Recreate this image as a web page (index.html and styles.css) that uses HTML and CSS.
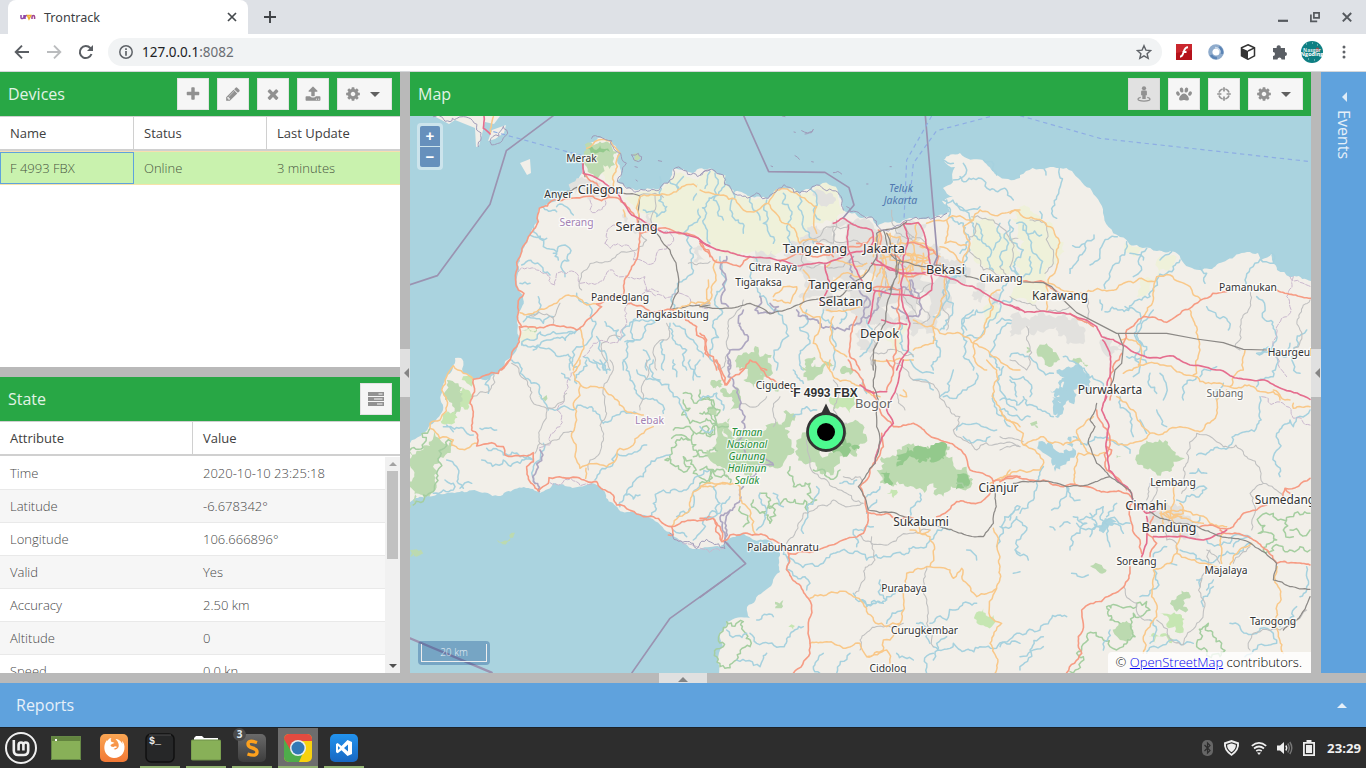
FILE: index.html
```html
<!DOCTYPE html>
<html lang="en">
<head>
<meta charset="utf-8">
<title>Trontrack</title>
<link rel="stylesheet" href="styles.css">
</head>
<body>
<svg class="defs" width="0" height="0" aria-hidden="true">
  <symbol id="plus" viewBox="0 0 1792 1792"><path d="M1600 736v192q0 40-28 68t-68 28h-416v416q0 40-28 68t-68 28h-192q-40 0-68-28t-28-68v-416h-416q-40 0-68-28t-28-68v-192q0-40 28-68t68-28h416v-416q0-40 28-68t68-28h192q40 0 68 28t28 68v416h416q40 0 68 28t28 68z"/></symbol>
  <symbol id="pencil" viewBox="0 0 1792 1792"><path d="M491 1536l91-91-235-235-91 91v107h128v128h107zm523-928q0-22-22-22-10 0-17 7l-542 542q-7 7-7 17 0 22 22 22 10 0 17-7l542-542q7-7 7-17zm-54-192l416 416-832 832h-416v-416zm683 96q0 53-37 90l-166 166-416-416 166-165q36-38 90-38 53 0 91 38l235 234q37 39 37 91z"/></symbol>
  <symbol id="times" viewBox="0 0 1792 1792"><path d="M1490 1322q0 40-28 68l-136 136q-28 28-68 28t-68-28l-294-294-294 294q-28 28-68 28t-68-28l-136-136q-28-28-28-68t28-68l294-294-294-294q-28-28-28-68t28-68l136-136q28-28 68-28t68 28l294 294 294-294q28-28 68-28t68 28l136 136q28 28 28 68t-28 68l-294 294 294 294q28 28 28 68z"/></symbol>
  <symbol id="upload" viewBox="0 0 1792 1792"><path d="M1344 1472q0-26-19-45t-45-19-45 19-19 45 19 45 45 19 45-19 19-45zm256 0q0-26-19-45t-45-19-45 19-19 45 19 45 45 19 45-19 19-45zm128-224v320q0 40-28 68t-68 28h-1472q-40 0-68-28t-28-68v-320q0-40 28-68t68-28h427q21 56 70.5 92t110.5 36h256q61 0 110.5-36t70.5-92h427q40 0 68 28t28 68zm-325-648q-17 40-59 40h-256v448q0 26-19 45t-45 19h-256q-26 0-45-19t-19-45v-448h-256q-42 0-59-40-17-39 14-69l448-448q18-19 45-19t45 19l448 448q31 30 14 69z"/></symbol>
  <symbol id="cog" viewBox="0 0 1792 1792"><path d="M1152 896q0-106-75-181t-181-75-181 75-75 181 75 181 181 75 181-75 75-181zm512-109v222q0 12-8 23t-20 13l-185 28q-19 54-39 91 35 50 107 138 10 12 10 25t-9 23q-27 37-99 108t-94 71q-12 0-26-9l-138-108q-44 23-91 38-16 136-29 186-7 28-36 28h-222q-14 0-24.5-8.5t-11.5-21.5l-28-184q-49-16-90-37l-141 107q-10 9-25 9-14 0-25-11-126-114-165-168-7-10-7-23 0-12 8-23 15-21 51-66.5t54-70.5q-27-50-41-99l-183-27q-13-2-21-12.5t-8-23.5v-222q0-12 8-23t19-13l186-28q14-46 39-92-40-57-107-138-10-12-10-24 0-10 9-23 26-36 98.5-107.5t94.5-71.5q13 0 26 10l138 107q44-23 91-38 16-136 29-186 7-28 36-28h222q14 0 24.5 8.5t11.5 21.5l28 184q49 16 90 37l142-107q9-9 24-9 13 0 25 10 129 119 165 170 7 8 7 22 0 12-8 23-15 21-51 66.5t-54 70.5q26 50 41 98l183 28q13 2 21 12.5t8 23.5z"/></symbol>
  <symbol id="street" viewBox="0 0 16 16"><circle cx="8" cy="2.300" r="2.100"/><path d="M6.300 4.600h3.400a1.200 1.200 0 0 1 1.200 1.200v3.400H9.700v3.900H6.300V9.200H5.100V5.800a1.200 1.200 0 0 1 1.200-1.200z"/><path d="M4.700 11.300C2.900 11.700 2 12.300 2 13c0 1.200 2.700 2.100 6 2.100s6-.9 6-2.100c0-.7-.9-1.300-2.700-1.700" fill="none" stroke="currentColor" stroke-width="1.300"/></symbol>
  <symbol id="paw" viewBox="0 0 16 16"><ellipse cx="5.600" cy="4" rx="1.800" ry="2.600" transform="rotate(-12 5.600 4)"/><ellipse cx="10.400" cy="4" rx="1.800" ry="2.600" transform="rotate(12 10.400 4)"/><ellipse cx="2" cy="7.600" rx="1.700" ry="2.300" transform="rotate(-25 2 7.600)"/><ellipse cx="14" cy="7.600" rx="1.700" ry="2.300" transform="rotate(25 14 7.600)"/><path d="M8 7.500c2.300 0 4.900 3.400 4.900 5.400 0 1.300-1 1.700-2.100 1.700-1.200 0-1.700-.7-2.800-.7s-1.700.7-2.900.7c-1.100 0-2-.5-2-1.700C3.100 10.900 5.700 7.500 8 7.500z"/></symbol>
  <symbol id="cross" viewBox="0 0 16 16"><path fill="none" stroke="currentColor" stroke-width="1.700" d="M6.600 3a5.200 5.200 0 0 0-3.600 3.600M9.400 3A5.200 5.200 0 0 1 13 6.600M13 9.400A5.200 5.200 0 0 1 9.400 13M6.600 13A5.200 5.200 0 0 1 3 9.400M8 1.200v4.200M8 10.600v4.200M1.200 8h4.200M10.600 8h4.200"/></symbol>
</svg>

<header class="tabs">
  <div class="tab">
    <svg class="favicon" viewBox="0 0 16 16" fill="none" stroke-width="1.500"><path stroke="#8e44a5" d="M1 6v2.500q0 1.500 1.500 1 1.500 0 1.500-2V6M5 10V8q0-1.500 2-1.500"/><path stroke="#f0b030" d="M7.500 6.500h3.300L9 10z"/><path stroke="#a04592" d="M12 10V8q0-1.500 1.300-1.500T14.600 8v2"/></svg>
    <span class="tab-title">Trontrack</span>
    <svg class="tab-close" viewBox="0 0 10 10"><path d="M1 1l8 8M9 1L1 9" stroke="#45494d" stroke-width="1.700"/></svg>
  </div>
  <svg class="new-tab" viewBox="0 0 12 12"><path d="M6 0v12M0 6h12" stroke="#3f4246" stroke-width="1.900"/></svg>
  <div class="win">
    <svg width="10" height="12" viewBox="0 0 10 12"><path d="M0 9.800h10" stroke="#55595e" stroke-width="2.200"/></svg>
    <svg width="10" height="12" viewBox="0 0 10 12" fill="none" stroke="#55595e" stroke-width="1.700"><path d="M3.900 1.900h5.200v5H3.900zM.9 3.500v6.800h6.300"/></svg>
    <svg width="10" height="12" viewBox="0 0 10 12"><path d="M.8 2l8.400 8.400M9.200 2L.8 10.400" stroke="#55595e" stroke-width="2"/></svg>
  </div>
</header>

<nav class="toolbar">
  <svg class="nav" viewBox="0 0 16 16"><path d="M15 8H2M8 1.700L1.700 8 8 14.300" fill="none" stroke="#5a5e63" stroke-width="1.900"/></svg>
  <svg class="nav" viewBox="0 0 16 16"><path d="M1 8h13M8 1.700L14.300 8 8 14.300" fill="none" stroke="#babcbe" stroke-width="1.900"/></svg>
  <svg class="nav" viewBox="0 0 16 16"><path d="M13.500 10A6 6 0 1 1 12.300 4L14 5.600" fill="none" stroke="#5a5e63" stroke-width="2"/><path d="M15 1v6H9z" fill="#5a5e63"/></svg>
  <div class="omnibox">
    <svg class="info" viewBox="0 0 14 14"><circle cx="7" cy="7" r="6.200" fill="none" stroke="#5f6368" stroke-width="1.500"/><path d="M7 3.200v1.700M7 6v4.800" stroke="#5f6368" stroke-width="1.700"/></svg>
    <span class="url">127.0.0.1<span>:8082</span></span>
    <svg class="star" viewBox="0 0 16 16"><path d="M8 1.700l1.900 4.400 4.800.4-3.600 3.200 1.100 4.700L8 11.900l-4.200 2.500 1.100-4.700L1.300 6.500l4.800-.4z" fill="none" stroke="#5f6368" stroke-width="1.400"/></svg>
  </div>
  <div class="exts">
    <svg width="16" height="16" viewBox="0 0 16 16"><path fill="#b5121b" d="M0 0h16v16H0z"/><path fill="#d8363c" d="M0 0h16v6L0 9z" opacity=".6"/><path d="M12 3.200c-3.500 0-3.700 3-4.500 5.300C6.800 10.800 6 12.700 4 12.800M6.500 8h4" stroke="#fff" stroke-width="1.900" fill="none"/></svg>
    <svg width="16" height="16" viewBox="0 0 16 16" fill="none"><circle cx="8" cy="8" r="5.700" stroke="#8eabcc" stroke-width="4.200"/><path d="M3 11A6 6 0 0 0 9 14M11 3q4 3 3 7" stroke="#5b84b5" stroke-width="2.500"/><path d="M7 3.500q5 .5 5 5" stroke="#c9d9e9" stroke-width="1.500"/></svg>
    <svg width="16" height="16" viewBox="0 0 16 16"><path d="M8 .8l6.500 3v8L8 15.300l-6.500-3.500v-8z" fill="#fff" stroke="#333" stroke-width="1.500"/><path d="M1.500 4L8 7v8.300l-6.500-3.500z" fill="#333"/><path d="M8 7l6.500-3.200" stroke="#333" stroke-width="1.400"/></svg>
    <svg width="16" height="16" viewBox="0 0 16 16"><path fill="#5a5e64" d="M1 4h3.700a2.100 2.100 0 1 1 4 0H13v4a2 2 0 1 1 0 4v3.500H9.500a2 2 0 1 0-4 0H1V12a2 2 0 1 0 0-4z"/></svg>
    <svg class="avatar" width="22" height="22" viewBox="0 0 22 22"><circle cx="11" cy="11" r="11" fill="#0e7f83"/><path d="M5 3h1M16 4h1M3 8h1M18 15h1M7 18h1M13 19h1M11 2h1M4 15h1" stroke="#b6dede"/><path d="M15 7q3-2 4 3l-4 1z" fill="#9a4d52"/><text x="11" y="10.500">Nasgor</text><text x="11" y="15" class="b">Ngoding</text></svg>
    <svg class="dots" width="4" height="14" viewBox="0 0 4 14" fill="#5f6368"><circle cx="2" cy="2" r="1.500"/><circle cx="2" cy="7" r="1.500"/><circle cx="2" cy="12" r="1.500"/></svg>
  </div>
</nav>

<main class="app">
  <section class="left">
    <div class="panel devices">
      <div class="bar"><h2>Devices</h2>
        <button class="btn"><svg><use href="#plus"/></svg></button>
        <button class="btn"><svg><use href="#pencil"/></svg></button>
        <button class="btn"><svg><use href="#times"/></svg></button>
        <button class="btn"><svg><use href="#upload"/></svg></button>
        <button class="btn menu"><svg><use href="#cog"/></svg><i></i></button>
      </div>
      <div class="head three"><span>Name</span><span>Status</span><span>Last Update</span></div>
      <div class="row three picked"><span class="focus">F 4993 FBX</span><span>Online</span><span>3 minutes</span></div>
    </div>
    <div class="split-h"></div>
    <div class="panel state">
      <div class="bar"><h2>State</h2>
        <button class="btn"><svg viewBox="0 0 16 16"><path fill-rule="evenodd" d="M0 1h16v4H0zM10.500 2.500v1h4v-1zM0 6h16v4H0zM6 7.500v1h8.500v-1zM0 11h16v4H0zM9 12.500v1h5.500v-1z"/></svg></button>
      </div>
      <div class="head two"><span>Attribute</span><span>Value</span></div>
      <div class="scroller">
        <div class="rows">
          <div class="row two"><span>Time</span><span>2020-10-10 23:25:18</span></div>
          <div class="row two"><span>Latitude</span><span>-6.678342°</span></div>
          <div class="row two"><span>Longitude</span><span>106.666896°</span></div>
          <div class="row two"><span>Valid</span><span>Yes</span></div>
          <div class="row two"><span>Accuracy</span><span>2.50 km</span></div>
          <div class="row two"><span>Altitude</span><span>0</span></div>
          <div class="row two"><span>Speed</span><span>0.0 kn</span></div>
        </div>
        <div class="scrollbar"><i class="up"></i><b></b><i class="down"></i></div>
      </div>
    </div>
  </section>
  <div class="split-v"><i></i></div>
  <section class="mappanel">
    <div class="bar"><h2>Map</h2>
      <button class="btn pressed"><svg><use href="#street"/></svg></button>
      <button class="btn"><svg><use href="#paw"/></svg></button>
      <button class="btn"><svg><use href="#cross"/></svg></button>
      <button class="btn menu"><svg><use href="#cog"/></svg><i></i></button>
    </div>
    <div class="mapview">
<svg class="map" viewBox="410 116 901 557">
<path class="land rough" d="M502 370 513 355 519 340 517 323 518 313 523 297 518 287 518 273 520 257 528 237 538 222 539 208 553 202 573 185 582 173 583 157 590 143 598 138 610 141 619 153 621 173 617 182 627 188 643 190 660 188 670 180 673 169 693 173 712 169 723 175 732 190 750 197 768 198 778 188 800 193 817 185 838 193 843 210 855 213 862 218 873 218 877 227 900 223 913 218 933 218 950 212 942 201 953 197 943 188 953 182 955 167 943 160 960 153 983 160 997 175 1020 178 1020 175 1047 168 1060 168 1072 171 1090 188 1103 213 1120 237 1143 248 1157 251 1175 252 1192 268 1212 269 1227 260 1247 252 1258 253 1261 260 1272 253 1277 270 1290 277 1320 290 1320 680 717 680 718 660 723 647 720 632 727 622 750 618 747 607 763 592 780 572 780 553 772 542 743 533 727 540 720 547 700 549 687 545 677 538 670 532 650 518 627 512 613 503 603 490 592 483 553 483 540 493 533 489 498 496 477 491 437 494 405 506 405 452 423 433 430 425 443 410 442 390 453 368 455 358 461 358 463 373 473 380 497 374Z"/>
<path class="land" d="M410 116H500L494 124 485 122 479 146 476 147 475 128 455 120 449 124 432 115ZM492 130l14-5-2 8-9 6-7 2zM520 163l10-4 1 14-4 2z"/>
<g transform="translate(410 110) scale(.33333)">
  <path class="farm rough" d="M790 180 900 190 970 240 1000 300 1000 420 900 405 830 370 760 350 700 310 640 260 690 245 750 240 780 215ZM330 670 385 645 380 690 340 700ZM580 165 615 165 605 225 585 210Z"/>
  <path class="wood rough" d="M522 125 545 98 595 97 622 125 615 165 580 165 570 195 540 190 525 165ZM665 135 685 130 692 145 675 155ZM335 662 380 655 375 668Z"/>
  <path class="wood3 rough" d="M530 115 570 105 600 125 560 130Z"/>
  <path class="urban rough" d="M500 205 560 210 600 225 600 260 560 260 480 235ZM640 310 720 300 740 350 660 350ZM840 420 880 415 885 450 850 455Z"/>
  <path class="river rough" d="M370 345 385 380 410 385M430 430 445 410 465 405 480 430 455 460 465 500M360 365 400 410 440 425 445 450M335 465 390 465 420 495M440 290 480 300 490 315M395 290 440 305M340 635 400 640 430 620M335 700 390 705 420 690 500 660M335 705 360 690 430 665 510 655M385 560 390 595 350 620M545 610 548 660 500 710 480 780M370 720 430 725 500 770M585 635 625 660 630 690 740 630M740 630 690 690 650 700 640 780M780 640 790 690 830 720 830 780M790 640 850 690 880 740M500 550 540 590 545 610M680 625 675 690 645 695M750 200 765 290M820 200 805 240 765 215M900 205 870 250 820 370 835 400 820 510 790 600M770 290 740 320 700 300M330 520 360 520M880 200 850 270M560 680 590 740 580 780M520 740 560 760 570 780M700 720 710 780M760 690 760 780"/>
  <path class="minor rough" d="M515 540 510 510 560 455 620 435 680 420 710 390 690 360M690 255 735 250 760 262M735 255 725 340M430 640 450 580M340 612 430 625M630 680 575 700 580 740 600 780M770 640 770 690 730 720 740 780M835 460 885 460 900 455"/>
  <path class="county rough" d="M325 485 380 480 410 490 435 525 440 490 500 490 510 520 545 520 600 480 640 500 705 500 710 540 655 580 650 640 600 700 540 715 520 740M585 400 590 370 620 345 660 345M585 400 600 415 650 405 670 450 730 460 785 400 790 380 745 360M540 270 540 300 575 300 585 270M710 545 765 565 800 550 860 585 900 590M705 540 745 545"/>
  <path class="rail rough" d="M525 200 520 160M625 248 690 258 685 340 740 370 780 420 805 500 805 545 780 600 900 585M470 245 500 232"/>
  <path class="sec rough" d="M330 608 380 605 440 580 490 557 560 582M510 655 520 690 510 740 490 780M610 230 622 170 630 130 600 93 565 90 530 115M685 330 690 260 740 255 800 245 850 222 900 245M895 510 890 550 900 580 790 600M250 20 240 70M640 300 645 320"/>
  <path class="prim rough" d="M275 780 320 710 328 650 380 655 420 645 500 660 545 620 575 590 560 582 640 555 650 500 690 370 670 310 645 280 600 262 575 272 520 260 480 265 430 270 388 295 385 335 355 380 330 440 325 540 342 550 322 620 335 650M520 190 560 220 600 262M650 580 700 590 720 605 790 600M820 620 860 650 860 675 885 690 885 730 900 745M745 355 830 370 870 390 900 440M690 370 720 362"/>
  <path class="mot rough" d="M518 160 520 190 570 210 600 232 630 260 665 315 720 345 760 368 830 375 865 385 900 410M222 18 220 55 240 72"/>
  <path class="isle rough" d="M665 135 685 130 695 140 685 155 672 150ZM280 50 290 60 245 105 240 95ZM70 20 120 35 160 20 200 60 205 110M675 170 682 172M745 152 755 154M678 210 682 213M545 85 570 80 605 92 632 130 635 190 622 215 650 235 700 240 750 235 780 210 790 178 850 190 900 180"/>
  <path class="admin" d="M0 524 82 497 240 283 289 122 430 17"/>
  <path class="ferry" d="M250 65 520 138"/>
</g>
<g transform="translate(700 110) scale(.33333)">
  <path class="farm rough" d="M0 200 35 180 70 200 95 245 200 270 235 238 300 255 350 228 415 250 435 305 380 330 330 350 330 390 250 400 130 430 60 400 0 380ZM810 320 870 320 920 370 950 460 930 490 850 470 815 400ZM550 680 640 650 600 730ZM850 640 900 600 870 570ZM960 290 1000 310 1060 350 1080 450 1030 520 950 470Z"/>
  <path class="urban rough" d="M310 380 400 330 480 330 530 360 620 340 680 340 720 440 780 450 800 500 730 520 720 600 700 670 640 680 600 630 540 640 520 720 480 720 470 620 400 600 300 590 310 500 260 470ZM830 520 890 540 880 590 820 570ZM165 420 230 440 220 470 160 450ZM360 240 400 260 380 290 350 280Z"/>
  <path class="land rough" d="M540 590 600 570 640 600 580 630ZM640 540 690 560 680 640 640 620ZM400 350 440 340 440 400 400 400ZM480 480 530 500 520 530 490 520ZM330 400 390 400 380 470 320 450ZM700 460 740 480 700 520 660 510ZM400 500 450 520 440 580 400 560ZM500 640 540 650 510 700 490 680Z"/>
  <path class="wood rough" d="M115 735 215 735 215 780 120 780ZM325 745 345 740 350 780 325 780ZM365 765 410 770 410 780 360 780Z"/>
  <path class="river rough" d="M30 185 15 235M45 190 40 270 70 330M80 215 40 260 10 340 30 400M110 240 115 330 130 370M200 270 190 340 220 400M250 250 270 300 260 350 280 410M300 255 310 320 340 400M330 235 340 300 360 330M150 265 160 300 180 330M60 440 75 520 65 600 40 640 30 720 60 780M160 440 150 500 180 560 230 600 250 640 230 780M320 600 330 700 310 780M370 600 400 690 400 780M430 600 420 640M500 630 480 740M600 640 600 700 640 740M780 500 730 540 760 580 720 660M810 420 800 500M820 600 800 660M730 150 760 160M730 270 780 290 820 340 840 390M780 200 820 205 850 210M740 270 790 340 780 430M850 150 890 195M850 210 870 240 940 270M770 500 700 620M960 500 900 560 830 600 790 680M940 560 900 580 870 630 790 680 790 740 820 780M960 640 900 670 870 740 900 780M700 680 720 740 700 780M880 480 870 440 850 400 830 340M900 340 880 420M930 350 920 420 900 470M770 280 840 290M760 210 790 200 790 160M890 640 960 650"/>
  <path class="minor rough" d="M0 590 30 570M340 395 400 400 410 330M320 470 430 470 500 460M400 350 400 390 480 400M620 370 680 400M610 340 640 400 600 440M530 400 560 500 530 600M740 490 730 560 740 660M540 640 520 780M630 520 610 560 650 620M815 320 880 330 930 390 960 380M350 530 420 540 480 520M600 380 590 440 620 480M130 570 100 620 90 720 60 780M700 520 650 580 690 620 640 640M300 480 310 400 380 350 460 340M575 300 590 370 640 380M520 730 640 735M830 340 810 380 850 480 930 500M900 470 940 510 960 510"/>
  <path class="cnt rough" d="M80 440 65 480 75 540 65 580 85 590M180 560 165 600 215 610 235 590 210 580M120 640 145 680 125 715 90 720 85 780M130 600 115 640M290 600 295 618 490 620 500 560 480 530 450 500 460 440M490 620 530 600 560 540 640 560 630 510M500 560 490 590M575 590 620 625 655 620 655 550 635 510"/>
  <path class="sec rough" d="M0 240 70 255 130 300 205 280 230 240 290 250 350 290 350 370M205 280 240 330 290 370 300 400 350 390M0 590 30 570 50 450M220 560 250 530 290 530 270 580 220 570M310 480 330 520 300 590 360 620 340 700 390 780M380 470 400 450 470 470 500 460M390 520 430 490 480 500 500 480M380 600 440 600 480 590M400 620 390 680 440 740M620 430 640 480 610 500M540 420 600 430 650 440 700 430M560 370 600 380 600 430M570 370 570 450 600 460M540 370 520 440M600 460 700 470M650 340 650 460M620 480 630 540M550 480 560 540M600 450 690 450M660 410 720 440M540 360 550 440 530 500M740 330 735 400 800 405M740 330 820 330 840 300 960 300M680 340 740 330M720 410 790 460 810 400 790 350 820 330M640 630 700 650 720 670 780 670 820 700 960 780M870 560 870 620 820 700 820 740 860 780M720 460 740 500 720 600 700 700 640 720M900 540 870 560M550 420 550 500 540 560M520 750 600 745 640 750M590 450 595 520M570 400 700 420M640 430 640 500M670 430 670 490M585 475 700 485M540 445 690 450M520 460 515 540"/>
  <path class="prim rough" d="M0 400 40 450 120 470 150 440M240 455 290 430 400 430 480 410 520 380M500 400 470 400M350 400 390 420 400 440M470 620 450 740 480 780M0 670 20 690 15 720 40 740 50 780M120 780 150 755 200 780M600 490 640 500 720 490M510 540 600 540M600 540 590 600 600 650 580 740 580 780M620 400 700 420 715 440 710 470M535 360 540 420 600 450"/>
  <path class="mot rough" d="M0 395 35 412 100 430 150 440 230 450 290 468 380 460 440 435 480 425 530 420 560 425M445 345 445 420 470 480 490 520M430 325 480 352 515 360 520 395 500 420M515 460 600 490 640 490 740 500 840 540 960 600M610 340 655 338 675 380 690 460 695 540 660 565 520 540M375 465 390 520 360 580M400 340 430 323M610 490 605 560 630 640 625 720 590 780M610 490 610 440 625 390 610 340M545 630 620 643M525 545 515 600 505 640M530 430 530 450 570 480 640 490"/>
  <path class="rail rough" d="M0 590 150 580 210 612 280 590 420 560 490 500 530 440 530 370 550 360 600 350 620 335M560 370 590 450 740 470 800 500 840 510M600 450 580 520 560 600 555 640 520 720 520 780M550 360 570 430 590 450M590 450 590 500 570 540"/>
  <path class="isle rough" d="M305 62 340 58 315 72M285 137 298 148M247 18 255 20M400 188 425 192M335 155 340 156M570 170 574 170M500 222 504 222M213 168 218 170M282 66 286 67M440 290 470 305 520 325 530 345 600 345 640 325 700 325 740 310"/>
  <path class="isle rough" d="M0 195 35 178 70 195 95 240 150 262 205 265 235 235 300 250 350 225 415 248 430 300"/>
  <path class="admin" d="M131 17 206 185 375 187 447 233 462 285 430 323M676 17 712 440 695 480"/>
  <path class="ferry" d="M695 18 620 150 612 330M870 20 710 62 640 160 630 260"/>
</g>
<g transform="translate(1010 110) scale(.33333)">
  <path class="farm rough" d="M0 320 60 340 90 420 110 490 60 580 0 560ZM460 440 500 440 490 470 440 500ZM385 500 435 510 405 560 380 560ZM340 390 400 415 370 440Z"/>
  <path class="urban rough" d="M0 620 60 630 100 600 160 610 220 650 210 700 170 690 140 650 60 650 0 680ZM270 690 330 690 335 730 300 740Z"/>
  <path class="wood rough" d="M85 710 110 700 150 750 130 765 95 740ZM50 710 60 725 50 730ZM190 745 235 765 230 770 185 755Z"/>
  <path class="lake rough" d="M140 790 190 770 240 800 240 830 205 825 175 870 135 860Z"/>
  <path class="river rough" d="M0 330 40 420 30 500M20 340 70 430 90 490M40 345 50 370 95 375M0 470 40 500 60 440M148 175 140 260 125 310 140 325M103 178 108 195M188 407 225 400 252 375M225 400 205 450 180 490M322 380 275 410 240 465M350 395 330 440 300 500 285 535M410 415 395 480 370 500M400 450 360 430M485 425 450 450M510 450 470 490 440 510 420 560 370 580 330 600 285 605M570 470 590 490 585 520M785 430 790 460 720 475 705 510 720 540M345 590 390 640 380 690 410 710 400 740M430 600 390 660 380 730 370 800M590 590 620 620 640 620 655 660M740 560 765 590 765 630 795 660 790 700M790 700 740 730 830 740 840 700M890 660 860 690 850 760 870 790M0 740 60 740 90 780 130 790M160 740 200 760 230 800 280 830M0 800 40 800 60 860M560 800 520 840 520 870M620 770 570 800M800 740 790 800 740 830M350 740 410 760M450 790 470 830 460 870M420 790 440 850M90 305 95 325M270 570 275 600M640 820 620 870"/>
  <path class="minor rough" d="M0 390 10 430 0 470M60 330 110 350 130 420 130 460 105 490M230 640 235 570 220 550M720 540 715 600 690 650 675 710 690 720M900 570 870 610 870 660 850 720M0 560 60 580 120 600 180 590M50 650 60 710 50 780M0 750 50 780"/>
  <path class="county rough" d="M850 500 830 560 830 620 800 670 795 740 830 800M840 500 903 530"/>
  <path class="sec rough" d="M0 310 15 300 50 325 100 335 145 385 140 440 120 500 115 520 180 545 290 543 395 505 435 515 440 500 480 495 540 530 572 570M435 515 430 570 400 620M110 520 110 600M540 600 560 650 570 720 560 790 550 795M340 790 390 765 460 765 500 785 560 800 620 820 680 835 730 830 790 845 810 870M705 720 700 780 670 800 660 830M335 690 390 705 385 765M150 560 130 540"/>
  <path class="prim rough" d="M40 513 100 515 150 550M340 700 350 660 400 620 470 637 535 598 572 570 650 545M800 540 850 555 903 565M180 610 250 650M300 870 300 800 335 730"/>
  <path class="mot rough" d="M0 585 45 607 100 603 180 612 260 650 275 680 340 705 410 742 490 738 540 765 630 780 660 797 770 812 820 838 900 868M278 690 302 740 300 800 285 870"/>
  <path class="rail" d="M40 516 100 518 125 530 160 570 200 608 320 670 470 670 560 687 640 698 700 718 770 720M325 672 340 710 335 760 315 780 310 810 290 850"/>
  <path class="ferry" d="M30 17 270 85 903 155"/>
</g>
<g transform="translate(410 360) scale(.33333)">
  <path class="wood rough" d="M60 205 125 245 90 290 80 340 70 395 40 405 10 435 -15 440 -15 270ZM110 60 145 70 150 155 120 165 105 120ZM260 540 315 518 312 525 265 542ZM0 570 20 568 40 580 20 590 0 590ZM910 190 960 175 960 310 920 315 905 265ZM905 60 930 60 935 80 915 88ZM895 140 925 145 920 165 900 165ZM385 108 410 105 405 125Z"/>
  <path class="wood2 rough" d="M145 95 175 90 178 140 150 140ZM105 160 138 155 135 188 92 185ZM155 60 190 55 185 80Z"/>
  <path class="forest rough" d="M60 205 0 270M125 245 90 290 80 340 70 395 40 405 10 435M820 100 860 130 905 120 930 150 920 190 880 185 840 190 815 165 840 145 820 120M790 210 850 215 900 225 955 200M850 215 850 270 900 270 930 300 880 290 850 290M765 300 800 255 840 240 785 235M765 300 790 315 840 320 820 290 845 300 850 340 910 330 960 370M900 330 950 350"/>
  <path class="river rough" d="M305 0 330 40 380 70 400 120 415 150M110 300 140 320 145 370 160 385M185 370 150 385M210 205 260 210M215 300 280 300 330 310 370 300M230 265 280 285 330 290 370 305M110 195 160 205 190 225M415 145 490 150 520 140 560 160 580 190 620 165 680 160M640 0 660 60 690 110 740 120 760 160M730 0 740 60 790 110 830 170M790 0 800 50M840 0 850 60M710 255 690 270 620 280 600 320 555 360M780 285 740 295 700 350 650 400 630 440M900 330 850 370 800 390 760 390 730 430 720 470M870 370 850 440 800 470M960 410 930 460 880 480 850 540M400 250 370 320 375 370M70 400 100 390 130 390M105 360 130 370 130 390M130 215 100 200M500 70 520 30 530 0M550 0 590 40M570 0 600 30M790 510 830 530M920 100 940 150M870 50 870 0M690 405 650 405M240 50 235 100M455 40 480 60M680 30 750 60"/>
  <path class="cnt rough" d="M960 450 945 490 945 545 960 560M390 270 380 330 368 350 388 395"/>
  <path class="county rough" d="M500 30 470 90 440 150 450 200 420 255 385 265M545 372 420 368M800 540 860 560 940 565"/>
  <path class="minor rough" d="M305 10 350 60 360 110 410 145 395 200 390 250 440 240 490 215M375 280 390 250M470 100 440 135 410 145M600 0 605 40 585 110 590 160 575 210 575 260 540 300 535 330M710 0 705 60 690 150M185 110 240 90 250 40"/>
  <path class="sec rough" d="M190 60 160 40 130 17 110 50 95 90 110 120 90 180 60 190 60 205 130 240 125 255 150 268 200 250M510 0 490 40 512 75 490 130 500 180 485 220 495 290 510 325 590 320 630 265 670 255 690 225 730 200M512 75 560 80 610 110 650 155 700 165M528 325 527 355M785 500 840 450 850 395 900 378 960 372"/>
  <path class="prim rough" d="M300 0 265 40 190 58 180 130 190 155 185 210 203 225 200 258 245 248 280 260 285 285 330 288 370 278 370 305 350 320 355 350 385 393 415 370 417 353 500 352 560 365 620 435 700 470 730 470 785 500 790 525 775 525M785 500 850 480 895 470 915 480 935 545 950 540M920 0 935 50 950 75 960 60"/>
  <path class="admin wide" d="M0 835 245 938"/><path class="admin" d="M666 938 779 776 960 646"/>
  <path class="isle rough" d="M945 545 945 566 860 566 850 550 800 540 780 520"/>
</g>
<g transform="translate(700 360) scale(.33333)">
  <path class="wood rough" d="M20 270 70 210 150 220 215 190 270 215 275 250 250 310 200 310 150 350 90 340 40 310ZM290 250 330 215 360 270 400 280 430 210 480 190 495 250 470 290 420 310 400 345 350 330 310 310ZM540 370 530 330 590 270 640 250 670 260 710 260 750 260 760 310 800 320 790 390 730 410 700 370 640 380 580 380ZM60 90 110 80 120 130 90 150ZM120 0 180 0 190 60 130 60ZM305 20 345 10 370 30 340 60 310 50ZM35 60 65 60 60 85 40 85ZM215 60 240 70 235 95 205 90ZM250 155 280 160 270 200 245 190ZM225 725 250 720 245 745 225 745ZM420 30 460 35 450 45 425 42Z"/>
  <path class="wood2 rough" d="M825 765 850 745 880 765 875 800 830 780ZM390 110 450 90 470 130 450 160 400 150ZM560 400 590 390 580 415ZM265 800 285 798 280 810ZM350 190 380 200 370 220 340 215Z"/>
  <path class="wood3 rough" d="M590 285 620 260 640 275 690 265 740 265 720 300 690 290 660 310 620 300 590 320ZM420 220 440 210 440 250 480 260 430 290 400 280ZM540 340 560 330 580 370 555 370ZM770 360 790 340 790 385 760 395Z"/>
  <path class="forest rough" d="M0 160 40 180 30 230 0 220M0 330 40 330 30 370 0 370M270 320 280 380 330 370 350 420 320 450 240 435 180 460 160 420M80 785 130 785 150 860 110 900 60 920 50 890 70 860 60 820ZM120 440 130 500M340 330 380 350 420 330M770 370 800 380M180 400 200 400 210 490 180 460M0 90 40 120 20 160"/>
  <path class="river rough" d="M180 400 200 450 170 510M220 400 250 440M40 380 60 430 20 480M250 570 280 600 400 580 450 580 500 600 560 590 640 560 690 540 750 510M260 590 290 650 330 670 320 690M460 700 520 730 560 710 610 700M540 660 560 720M560 790 610 750M480 720 500 740 550 730M150 820 170 850 240 860 270 830 310 800M80 810 140 820M370 880 340 920 360 940M450 880 410 940M530 420 500 460M500 410 540 380M660 400 640 440 630 470M740 830 710 850 700 900M690 790 740 780 780 740 830 730M700 860 760 850 840 860 960 850M960 440 910 490 890 560M880 100 890 160 930 200M730 110 800 90 830 40M760 30 720 110M910 20 900 80 950 150M630 0 700 40M500 100 490 60M280 170 320 140 350 150M420 370 470 360M350 380 320 440 310 520M0 200 40 210M0 120 50 100M770 210 830 190 890 210M960 580 945 570M170 780 220 770M110 900 180 920 200 880M280 30 310 70M520 500 460 510 470 560M800 570 830 600M930 60 950 110M790 230 840 240 870 230M590 880 640 900M640 60 700 90M930 480 960 440M650 790 690 850M700 880 680 940"/>
  <path class="minor rough" d="M120 130 180 130 200 110M220 200 220 160 240 110M320 240 330 320 380 360 440 400 490 430 400 420 310 460 290 510 260 550M430 350 480 350 490 370M480 525 570 550 640 520 690 510M515 530 525 600 480 680 465 700M615 150 590 100M590 10 620 30 640 60 740 140 780 170 760 210 790 240 830 270 960 260M680 620 670 680 685 760 680 790 700 860M610 790 570 800 480 840 480 870M400 60 400 150 440 190"/>
  <path class="cnt rough" d="M85 0 100 60 120 120 110 250 140 290 200 300 220 315 150 350M130 380 110 430 75 460 75 540"/>
  <path class="sec rough" d="M0 385 60 372 120 380 120 400 150 450 165 520M390 0 400 50 490 75 510 100 540 110M860 0 890 30 880 80 920 180 960 200M650 480 660 520 690 530 700 580 690 620 620 640 610 700 600 790 560 800 460 710 330 715M690 620 750 630 760 655 785 625 800 670 830 710 890 685 870 770 905 790 870 850 885 940M890 685 900 590 880 505M330 850 380 845 430 865 480 850 500 890 550 870 550 840 570 840 600 790M610 90 620 110 600 105M690 510 660 520 630 510M930 330 870 370M500 890 560 870 570 910"/>
  <path class="prim rough" d="M445 0 480 50 495 90 520 95 540 150 580 200 640 190 680 220 750 250 790 280 810 330 880 365 870 400 820 430 770 425 710 470M480 380 520 310 550 260 545 220M480 380 500 450 505 480 490 520 410 550 350 570 265 580 260 630 290 670 325 715 325 800 330 880 280 940M265 580 230 545 130 520 90 525 70 545M0 475 40 475 60 500 65 540M880 365 930 355 960 350M500 455 560 460 640 475M150 0 100 50 75 75 45 0M150 0 200 50 250 75 280 90M560 0 580 30 560 90"/>
  <path class="mot rough" d="M610 0 560 150 580 190 540 250 525 310M480 75 520 100 560 95"/>
  <path class="rail rough" d="M525 0 520 80 535 120 530 200 540 240 525 310 475 380 505 450 640 480 720 500 850 530 880 490 885 390"/>
  <path class="admin" d="M0 712 137 611 75 545"/>
</g>
<g transform="translate(1000 390) scale(.33333)">
  <path class="wood rough" d="M410 215 465 155 510 170 555 205 520 215 515 235 450 235ZM515 630 560 605 570 625 550 630 565 660 530 665ZM350 710 390 700 395 740 360 750ZM270 528 305 525 320 540 300 550ZM90 100 110 92 115 115ZM350 195 365 200 350 205Z"/>
  <path class="wood2 rough" d="M445 740 490 730 530 755 470 760ZM480 670 550 700 540 730 500 710Z"/>
  <path class="lake rough" d="M115 165 160 175 205 140 220 175 190 225 165 245 155 205 120 180ZM280 400 330 385 350 395 320 415 310 430 290 410ZM150 0 230 0 170 20 180 80 165 80Z"/>
  <path class="forest rough" d="M780 380 820 370 870 380 930 370M780 380 775 430 830 450 790 480 850 480 900 470 930 480M320 650 360 650 400 655 410 640 440 635 450 660 420 680 400 670 405 740 370 770 330 770 310 750 260 740 245 770 230 790 250 800 210 845M320 650 330 690 360 700M590 760 600 730 625 700 640 740 665 760 660 800 620 780 590 770ZM860 390 850 420 880 440M870 420 930 420"/>
  <path class="river rough" d="M0 30 50 45 70 30M0 60 90 80M70 20 110 50 160 80M220 140 330 150 390 190M360 20 390 70 400 140M420 90 440 130M470 60 500 110M780 20 770 110 720 130 640 180 590 195M930 60 880 110 870 90 830 130 820 200 840 260M570 250 620 250M60 370 100 330 110 280 130 230M0 410 50 380 80 420 50 450 50 490 85 510M155 360 200 310 200 290 240 330M240 390 280 380 310 350 300 380 320 430 330 470M220 380 260 400 240 430 210 480M320 380 350 340M340 400 370 430M0 770 60 730 120 720 150 690 200 680M60 840 90 780 130 740M60 800 130 770M215 550 240 560 265 555M460 530 450 610 420 620M540 480 580 490 700 490 750 460M620 450 690 460 750 440 700 470M580 300 620 295 530 330M640 590 610 620 610 650M440 790 480 770 510 750 580 760M690 700 740 730 820 730 830 760 760 780 735 800M150 410 165 420M180 410 210 400M920 530 920 600 900 620M40 550 60 545M590 570 605 565 600 590M450 690 470 720 450 760M890 650 860 700 840 710M640 570 620 600M460 500 500 470M600 380 570 400M310 780 330 720M510 520 530 525M230 400 290 410 350 390 390 400M270 370 290 400 270 440"/>
  <path class="urban rough" d="M430 360 480 340 550 370 600 400 600 440 560 440 480 420 440 400Z"/>
  <path class="minor rough" d="M590 130 560 190 550 240 560 290 545 310M590 130 660 160 740 200 780 240 790 280 750 310 760 340 755 420M790 280 850 320M620 480 650 500 660 520M630 480 615 640 590 700 550 765 520 755 470 690M0 180 60 170M0 140 70 155M370 590 410 640 420 680 450 690M440 330 450 280 480 290M490 420 500 450 530 460 530 490M920 660 890 690 840 720 760 730 750 780M440 370 470 290M700 520 750 470"/>
  <path class="county rough" d="M785 20 850 40 930 105"/>
  <path class="sec rough" d="M0 60 40 100 70 130 70 165 130 210 120 240 40 245 0 275M70 165 100 150 130 140 190 165 240 150 230 120 280 80M240 150 270 190 320 190M270 190 235 190 225 285M350 20 400 60 450 130 500 125 540 110 600 125 640 90 650 30 680 0M320 150 390 160 450 130M490 360 540 360 620 385 630 400 680 410M480 370 500 380 560 385 610 400M500 340 510 400M530 280 520 400M500 380 545 380M540 400 530 490 600 520 650 530M530 490 490 530 460 540 455 620 470 680 430 740 430 790M670 430 665 520M690 525 755 460M832 530 830 650 835 740 850 790M880 40 880 55 930 50M490 350 490 400 470 420M540 340 550 370 490 370M820 0 870 30"/>
  <path class="prim rough" d="M0 275 50 258 130 270 190 290 280 295 380 310 400 330 395 400 420 450 425 490M290 60 310 110 330 150 320 240 380 300M245 790 235 740 245 660 360 600 390 550 390 530M200 848 245 790M600 410 660 415 700 410 730 370 770 360 800 345M850 325 855 295 930 265M660 420 760 450 830 520 930 525M460 380 440 430 470 460 450 500M855 295 870 310M320 170 335 180 325 200"/>
  <path class="mot rough" d="M320 20 305 60 327 110 318 160 327 240 380 290 395 310 400 340 440 370 470 360M425 500 440 460 440 380M460 440 520 440 610 450 680 420"/>
  <path class="rail rough" d="M290 40 270 90 285 110 265 160 290 220 330 260 390 300 400 340M40 280 160 278 200 290 280 278 330 260M450 365 480 385 580 405 700 445 755 462 830 520 820 570 870 590 930 598M930 620 890 690 850 720"/>
</g>
<g class="labels">
  <text x="581.500" y="162">Merak</text><text x="558.500" y="198">Anyer</text><text x="620" y="301">Pandeglang</text><text x="672.500" y="317.500">Rangkasbitung</text><text x="773" y="271">Citra Raya</text><text x="758.500" y="286">Tigaraksa</text><text x="1001" y="282">Cikarang</text><text x="1248" y="291">Pamanukan</text><text x="1294" y="356">Haurgeulis</text><text x="1225" y="396.500" class="soft">Subang</text><text x="776" y="389">Cigudeg</text><text x="783" y="551">Palabuhanratu</text><text x="904" y="592">Purabaya</text><text x="924.500" y="634">Curugkembar</text><text x="888" y="672">Cidolog</text><text x="1173" y="486">Lembang</text><text x="1136.500" y="565">Soreang</text><text x="1226" y="574">Majalaya</text><text x="1273" y="625">Tarogong</text>
  <g class="mid"><text x="1060" y="299.500">Karawang</text><text x="1110" y="393.500">Purwakarta</text><text x="998.500" y="491.500">Cianjur</text><text x="921" y="526">Sukabumi</text><text x="1285" y="504">Sumedang</text></g>
  <g class="big"><text x="600.500" y="194">Cilegon</text><text x="636.500" y="231">Serang</text><text x="815" y="252.500">Tangerang</text><text x="884" y="253">Jakarta</text><text x="840.500" y="288.500">Tangerang</text><text x="841" y="305.500">Selatan</text><text x="945.500" y="274">Bekasi</text><text x="879.500" y="338">Depok</text><text x="873.500" y="408" class="soft">Bogor</text><text x="1146" y="509.500">Cimahi</text><text x="1169" y="532">Bandung</text></g>
  <g class="regency"><text x="576.500" y="226">Serang</text><text x="649.500" y="424">Lebak</text></g>
  <g class="bay"><text x="901" y="191.500">Teluk</text><text x="900.500" y="203.500">Jakarta</text></g>
  <g class="park"><text x="747" y="436">Taman</text><text x="747" y="448">Nasional</text><text x="747" y="460">Gunung</text><text x="747" y="472">Halimun</text><text x="747" y="484">Salak</text></g>
</g>
<path d="M820 416 826 403.500 832 416z" fill="#333"/><circle cx="826" cy="432" r="18.500" fill="#4df98f" stroke="#333" stroke-width="2.800"/><circle cx="826" cy="432" r="9" fill="#000"/>
<text class="device" x="825.500" y="397">F 4993 FBX</text>
</svg>
      <div class="zoom"><button>+</button><button>−</button></div>
      <div class="scale"><div>20 km</div></div>
      <div class="credit">© <a href="#">OpenStreetMap</a> contributors.</div>
    </div>
  </section>
  <div class="split-v"><i></i></div>
  <aside class="events"><i></i><span>Events</span></aside>
</main>
<div class="split-b"><i></i></div>
<footer class="reports"><span>Reports</span><i></i></footer>

<div class="taskbar">
  <div class="task menuicon"><svg width="32" height="32" viewBox="0 0 32 32" fill="none" stroke="#f0f0f0"><circle cx="16" cy="16" r="15" stroke-width="2"/><path stroke-width="2.600" d="M8.800 8v10.500q0 4.500 4.500 4.500h5.400q4.500 0 4.500-4.500V13q0-2.500-2.400-2.500T18.400 13v5.500M18.400 13q0-2.500-2.400-2.500T13.600 13v5.500"/></svg></div>
  <div class="task first"><svg width="30" height="30" viewBox="0 0 30 30"><path fill="#88b058" d="M0 3h30v24H0z"/><path fill="#63843f" d="M0 3h30v5H0z"/><path fill="#fff" d="M4 6h2v2H4z"/><path fill="none" stroke="#668846" d="M.5 3.500h29v23H.5z"/></svg></div>
  <div class="task"><svg width="30" height="30" viewBox="0 0 30 30"><defs><linearGradient id="og" x2="0" y2="1"><stop stop-color="#faa653"/><stop offset="1" stop-color="#f27835"/></linearGradient></defs><rect x="1" y="1" width="28" height="28" rx="5" fill="url(#og)"/><path fill="#fff" d="M8 7c-5 6-3 17 7 18 8 0 12-7 10-14-.5-2-2-3-2-3l.5 3c-2-4-5-5-7-5 2 2 4 5 3 8-1 2-3 3-5 2l4-2c-2-1-3-1-4 0-2 0-3-1-3-2 1-1 2-1 4-2-1-1-2-1-3-1-1-2-1-3 0-4-2 0-3 1-4 3z"/></svg></div>
  <div class="task open"><svg width="30" height="30" viewBox="0 0 30 30"><rect x="1" y="1" width="28" height="28" rx="5" fill="#262728" stroke="#101010" stroke-width="1.500"/><path d="M4 2h22" stroke="#4d4d4d"/><text x="4" y="10.500" class="dollar">$_</text></svg></div>
  <div class="task open"><svg width="30" height="30" viewBox="0 0 30 30"><path fill="#fff" d="M3 5l2-2h6l2 2h14v5H3z"/><rect y="7" width="30" height="20" rx="1.500" fill="#88b058" stroke="#6f9048"/></svg></div>
  <div class="task open sub"><svg width="30" height="30" viewBox="0 0 30 30"><defs><linearGradient id="gg" x2="0" y2="1"><stop stop-color="#6a6a6a"/><stop offset="1" stop-color="#3d3d3d"/></linearGradient></defs><rect x="1" y="1" width="28" height="28" rx="5" fill="url(#gg)"/><path d="M20 9.500q-9-3-9 1.500 0 3 4.500 4t4.500 4q0 5-9.500 2" fill="none" stroke="#fda11d" stroke-width="3.400"/></svg><b>3</b></div>
  <div class="task open active"><svg width="30" height="30" viewBox="0 0 30 30"><defs><clipPath id="cc"><rect x="1" y="1" width="28" height="28" rx="5"/></clipPath></defs><g clip-path="url(#cc)"><path fill="#f8d20f" d="M1 1h28v28H1z"/><path fill="#4eac4b" d="M1 4l14 12 5 4-4 9H1z"/><path fill="#e34b40" d="M0 0h30v8H15L8 18 1 6z"/></g><circle cx="15" cy="15" r="8" fill="#e8eef2"/><circle cx="15" cy="15" r="6.500" fill="#3378b6"/></svg></div>
  <div class="task open"><svg width="30" height="30" viewBox="0 0 30 30"><defs><linearGradient id="bg" x2="0" y2="1"><stop stop-color="#2293ee"/><stop offset="1" stop-color="#1867c2"/></linearGradient></defs><rect x="1" y="1" width="28" height="28" rx="5" fill="url(#bg)"/><path fill="#fff" fill-rule="evenodd" d="M18.500 7l4.500 2v12l-4.500 2-6-5.800-3.800 3-1.700-1V11l1.700-1 3.800 3zM19 11.500L15 15l4 3.500zM9 12.900v4.200l2.200-2.100z"/></svg></div>
  <div class="tray">
    <svg width="11" height="16" viewBox="0 0 11 16"><rect width="11" height="16" rx="5" fill="#666"/><path d="M2.500 5L8 10.500 5.500 13V3L8 5.500 2.500 11" fill="none" stroke="#2c2c2c" stroke-width="1.200"/></svg>
    <svg width="17" height="16" viewBox="0 0 17 16"><path fill="#eee" d="M8.500 0L16 2.500q1 8-7.500 13.500Q0 10.500 1 2.500z"/><path fill="none" stroke="#2c2c2c" stroke-width="1.200" d="M8.500 2.800l5 1.600q.3 5-5 8.700-5.300-3.700-5-8.700z"/></svg>
    <svg width="16" height="16" viewBox="0 0 16 16" fill="none" stroke="#eee" stroke-width="1.700"><path d="M.8 5.800q7.200-6 14.400 0M3 8.500q5-4 10 0M5.200 11q2.800-2 5.600 0"/><path d="M6 12.500h4L8 15z" fill="#eee" stroke="none"/></svg>
    <svg width="16" height="16" viewBox="0 0 16 16"><path fill="#eee" d="M0 5.500h3L7 2v12l-4-3.500H0z"/><path fill="none" stroke="#eee" stroke-width="1.400" d="M8.800 5.500q1.800 2.500 0 5"/><path fill="none" stroke="#777" stroke-width="1.400" d="M10.800 3.500q3 4.500 0 9M12.800 2q4 6 0 12"/></svg>
    <svg width="12" height="16" viewBox="0 0 12 16"><path fill="#eee" fill-rule="evenodd" d="M3.500 0h5v2H12v14H0V2h3.500zM1.800 3.800v10.400h8.400V3.800z"/><path fill="#eee" d="M3 5h6v8H3z"/></svg>
    <time>23:29</time>
  </div>
</div>
<script src="map.js"></script>
</body>
</html>
```
FILE: styles.css
```css
* { box-sizing: border-box; }
body { margin: 0; width: 1366px; height: 768px; overflow: hidden; display: flex; flex-direction: column; font: 300 13px/1 "Open Sans", sans-serif; color: #484848; background: #fff; }
button { font: inherit; margin: 0; padding: 0; border: 0; }
svg { display: block; flex: none; }
.defs { position: absolute; }

.tabs { height: 34px; background: #dee1e6; display: flex; align-items: center; padding-left: 8px; }
.tab { width: 240px; height: 34px; background: #fff; border-radius: 8px 8px 0 0; display: flex; align-items: center; padding: 0 12px; }
.favicon { width: 16px; height: 16px; }
.tab-title { flex: 1; margin-left: 8px; font: 400 12.600px "Noto Sans", sans-serif; color: #3c4043; }
.tab-close { width: 10px; height: 10px; margin-right: -1px; }
.new-tab { width: 12px; height: 12px; margin-left: 16px; }
.win { margin-left: auto; display: flex; gap: 22px; padding-right: 14px; }

.toolbar { height: 38px; display: flex; align-items: center; padding: 0 0 2px 14px; border-bottom: 1px solid #d5d7da; }
.nav { width: 16px; height: 16px; margin-right: 16px; }
.omnibox { width: 1054px; height: 28px; margin-left: -2px; border-radius: 14px; background: #f1f3f4; display: flex; align-items: center; padding: 0 10px 0 11px; }
.info { width: 14px; height: 14px; }
.url { flex: 1; margin-left: 9px; font: 400 13.500px "Noto Sans", sans-serif; color: #202124; }
.url span { color: #6a6e73; }
.star { width: 16px; height: 16px; }
.exts { display: flex; align-items: center; gap: 16px; margin-left: 14px; }
.avatar { margin: 0 3px 0 -3px; }
.avatar text { font: 700 5px "Open Sans", sans-serif; fill: #d7eaea; text-anchor: middle; }
.avatar .b { font-size: 5.500px; fill: #fff; }

.app { height: 601px; display: flex; }
.left { width: 400px; display: flex; flex-direction: column; }
.panel { background: #fff; overflow: hidden; }
.devices { height: 295px; }
.state { height: 296px; display: flex; flex-direction: column; }
.bar { height: 44px; flex: none; background: #28a745; display: flex; align-items: center; gap: 8px; padding: 0 8px; }
.bar h2 { flex: 1; margin: 0; font: 400 16px/20px "Open Sans", sans-serif; color: #e2f3e6; }
.btn { width: 32px; height: 32px; background: #f6f6f6; border: 1px solid #e2e2e2; color: #919191; display: flex; align-items: center; justify-content: center; }
.btn svg { width: 16px; height: 16px; fill: currentColor; }
.btn.menu { width: 55px; justify-content: flex-start; padding-left: 7px; }
.btn.menu i { margin-left: 9px; border: 5px solid transparent; border-top-color: #606060; border-bottom: 0; }
.btn.pressed { background: #e1e1e1; border-color: #d8d8d8; }
.head { height: 35px; flex: none; border-top: 1px solid #d0d0d0; border-bottom: 2px solid #d0d0d0; display: grid; font-weight: 400; color: #404040; line-height: 32px; }
.head span { padding-left: 10px; border-left: 1px solid #d0d0d0; margin-left: -1px; }
.head span:first-child { border: 0; margin: 0; }
.three { grid-template-columns: 134px 133px 1fr; }
.two { grid-template-columns: 193px 1fr; }
.row { height: 33px; display: grid; line-height: 33px; border-bottom: 1px solid #e9e9e9; }
.row span { padding-left: 10px; }
.row:nth-child(even) { background: #f6f6f6; }
.row.picked { height: 34px; background: #c9f2ae; border-top: 1px solid #f8dfb0; border-bottom: 1px solid #f6e3a8; line-height: 32px; color: #48543f; }
.row .focus { border: 1px solid #5fa2dd; padding-left: 9px; line-height: 30px; }
.split-h { height: 10px; background: #b9b9b9; }
.split-v { width: 10px; background: #b9b9b9; display: flex; align-items: center; padding-top: 1px; }
.split-v i, .split-b i { background: #e0e0e0; display: flex; align-items: center; justify-content: center; }
.split-v i { width: 10px; height: 48px; }
.split-v i::before { content: ""; border: 5px solid transparent; border-right-color: #858585; border-left: 0; margin-left: 2px; }
.split-b { height: 10px; background: #b9b9b9; display: flex; justify-content: center; }
.split-b i { width: 48px; height: 10px; }
.split-b i::before { content: ""; border: 5px solid transparent; border-bottom-color: #858585; border-top: 0; margin-top: 2px; }
.scroller { flex: 1; display: flex; min-height: 0; padding-top: 1px; }
.rows { flex: 1; overflow: hidden; }
.scrollbar { width: 15px; background: #f1f1f1; display: flex; flex-direction: column; align-items: center; padding: 5px 0; }
.scrollbar b { width: 11px; height: 88px; background: #c1c1c1; margin-top: 5px; }
.scrollbar i { border: 4px solid transparent; }
.scrollbar .up { border-bottom-color: #a3a3a3; border-top: 0; }
.scrollbar .down { border-top-color: #505050; border-bottom: 0; margin-top: auto; }

.mappanel { width: 901px; display: flex; flex-direction: column; }
.mapview { position: relative; height: 557px; background: #aad3df; overflow: hidden; }
.map { width: 901px; height: 557px; }
.map path { stroke-linejoin: round; stroke-linecap: round; }
.land { fill: #f2efe9; }
.farm { fill: #eff1da; }
.urban { fill: #e2e1de; }
.wood { fill: #bcdab0; }
.wood2 { fill: #c6e6b2; }
.wood3 { fill: #93c98c; }
.lake { fill: #aad3df; }
.forest { fill: none; stroke: #a5cea0; stroke-width: 4.500; }
.river { fill: none; stroke: #a6d1de; stroke-width: 4.500; }
.minor { fill: none; stroke: #c0c0c0; stroke-width: 3.200; }
.county { fill: none; stroke: #c9b7cd; stroke-width: 3; stroke-dasharray: 14 5; }
.cnt { fill: none; stroke: #aea7c1; stroke-width: 5; }
.sec { fill: none; stroke: #f9c889; stroke-width: 4.500; }
.prim { fill: none; stroke: #f69b83; stroke-width: 4.800; }
.mot { fill: none; stroke: #e56d8e; stroke-width: 4.900; }
.rail { fill: none; stroke: #8c8986; stroke-width: 3.700; }
.isle { fill: none; stroke: #9f9bb9; stroke-width: 3; }
.admin { fill: none; stroke: #9b93b1; stroke-width: 5; }
.admin.wide { stroke-width: 7; }
.ferry { fill: none; stroke: #8eade4; stroke-width: 3.500; stroke-dasharray: 13 11; }
.map .ferry { stroke-linecap: butt; }
.labels { font: 400 10.300px "Noto Sans", sans-serif; fill: #333; text-anchor: middle; stroke: rgba(255,255,255,.75); stroke-width: 2.600px; stroke-linejoin: round; }
.labels text { paint-order: stroke; }
.labels .mid { font-size: 11.900px; }
.labels .big { font-size: 12.800px; }
.labels .soft { fill: #666; }
.regency { font-size: 10.300px; fill: #a382b4; }
.bay { font-size: 10.500px; font-style: italic; fill: #5078b0; stroke: none; }
.park { font-size: 10.300px; font-style: italic; fill: #27903a; }
.device { font: 700 12px "Liberation Sans", Arial, sans-serif; fill: #333; stroke: #fff; stroke-width: 2px; paint-order: stroke; text-anchor: middle; }
.zoom { position: absolute; left: 7px; top: 7px; width: 26px; padding: 3px; border-radius: 4px; background: rgba(255,255,255,.4); display: flex; flex-direction: column; gap: 1px; }
.zoom button { height: 20px; background: #6690bc; color: #fff; font: 700 15px/18px "Liberation Sans", Arial, sans-serif; border-radius: 2px 2px 0 0; }
.zoom button + button { border-radius: 0 0 2px 2px; }
.scale { position: absolute; left: 8px; bottom: 8px; width: 72px; height: 24px; padding: 3px; border-radius: 4px; background: rgba(0,60,136,.3); }
.scale div { height: 18px; border: 1px solid #eee; border-top: 0; color: #e6eef5; font-size: 10px; line-height: 16px; text-align: center; }
.credit { position: absolute; right: 0; bottom: 0; height: 21px; width: 203px; padding-right: 9px; border-radius: 4px 0 0; background: rgba(255,255,255,.8); color: #000; line-height: 20px; text-align: right; }
.credit a { color: #00e; }

.events { width: 45px; background: #5fa2dd; display: flex; flex-direction: column; align-items: center; padding: 20px 0 0 1px; }
.events i { border: 5px solid transparent; border-right: 5px solid #dfecf7; border-left: 0; }
.events span { margin-top: 8px; writing-mode: vertical-rl; font: 400 16px/20px "Open Sans", sans-serif; color: #e6f0f9; }
.reports { height: 44px; background: #5fa2dd; display: flex; align-items: center; justify-content: space-between; padding: 0 19px 0 16px; color: #e6f0f9; font-size: 16px; font-weight: 400; }
.reports i { border: 5px solid transparent; border-bottom-color: #e6f0f9; border-top: 0; }

.taskbar { height: 41px; background: #2d2d2d; border-top: 1px solid #1b2228; display: flex; }
.task { position: relative; width: 40px; height: 40px; margin-right: 6px; display: flex; align-items: center; justify-content: center; }
.menuicon { width: 42px; margin-right: 4px; }
.task.first { margin-right: 8px; }
.task.open { border-bottom: 2px solid #93b473; padding-top: 2px; }
.task.active { background: #6d6d6d; }
.dollar { font: 700 10px "Liberation Mono", monospace; fill: #eee; }
.sub b { position: absolute; left: 1px; top: 0; width: 13px; height: 13px; border-radius: 7px; background: #4b4b4b; color: #dfe9ef; font: 700 10px/13px "Noto Sans", sans-serif; text-align: center; }
.tray { margin-left: auto; display: flex; align-items: center; gap: 10px; padding-right: 5px; }
.tray svg:nth-child(3) { margin-left: 1px; }
.tray time { margin-left: 2px; font: 700 13.200px "Noto Sans", sans-serif; color: #f0f0f0; }
```
FILE: map.js
```js
// Gives coastlines, rivers and roads their natural irregular course:
// every straight segment is split by midpoint displacement.
let seed = 7;
const rand = () => (seed = (seed * 16807) % 2147483647) / 2147483647 - 0.5;

function split(a, b, min, rough, out) {
  const dx = b[0] - a[0], dy = b[1] - a[1], len = Math.hypot(dx, dy);
  if (len < min) { out.push(b); return; }
  const k = rand() * rough;
  const m = [(a[0] + b[0]) / 2 - dy * k, (a[1] + b[1]) / 2 + dx * k];
  split(a, m, min, rough, out);
  split(m, b, min, rough, out);
}

const amounts = { river: 0.6, forest: 0.8, wood: 0.8, wood2: 0.8, wood3: 0.9, urban: 0.9, farm: 0.5, lake: 1, land: 0.3, cnt: 0.6, minor: 0.4, county: 0.5, sec: 0.35, prim: 0.28, mot: 0.15, rail: 0.15, isle: 0.6 };

document.querySelectorAll('.rough').forEach(path => {
  const kind = path.classList[0];
  const scaled = path.parentNode.tagName === 'g';
  const min = scaled ? 12 : 4;
  path.setAttribute('d', path.getAttribute('d').split('M').filter(Boolean).map(part => {
    const closed = part.includes('Z');
    const n = part.match(/-?[\d.]+/g).map(Number);
    const pts = [];
    for (let i = 0; i < n.length; i += 2) pts.push([n[i], n[i + 1]]);
    if (closed) pts.push(pts[0]);
    const out = [pts[0]];
    for (let i = 1; i < pts.length; i++) split(pts[i - 1], pts[i], min, amounts[kind], out);
    return 'M' + out.map(p => p[0].toFixed(1) + ' ' + p[1].toFixed(1)).join('L') + (closed ? 'Z' : '');
  }).join(''));
});
```
